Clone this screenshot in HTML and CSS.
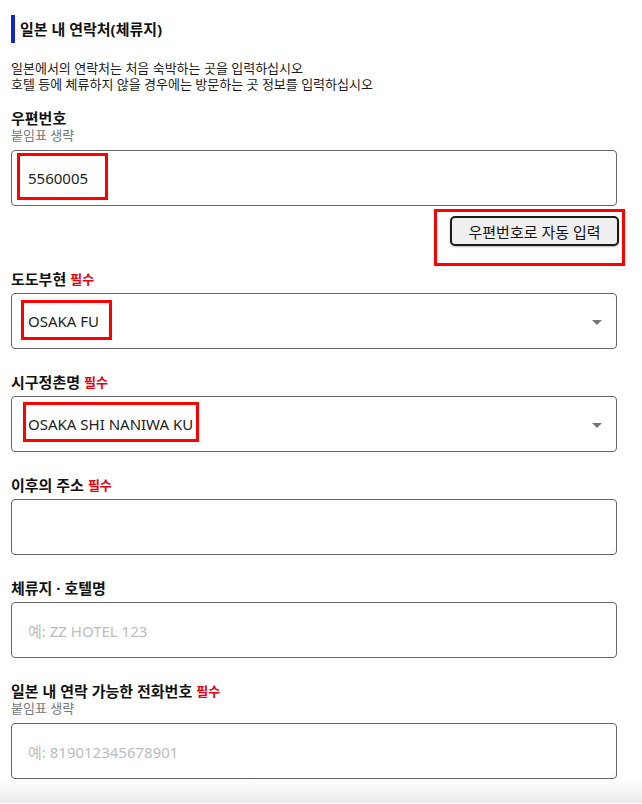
FILE: index.html
```html
<!DOCTYPE html>
<html lang="ko">
<head>
    <meta charset="UTF-8">
    <meta name="viewport" content="width=device-width, initial-scale=1.0">
    <title>일본 내 연락처</title>
    <link rel="stylesheet" href="styles.css">
</head>
<body>
    <div class="form">
        <h2 class="section-title">일본 내 연락처(체류지)</h2>
        <div class="desc">
            <p>일본에서의 연락처는 처음 숙박하는 곳을 입력하십시오</p>
            <p>호텔 등에 체류하지 않을 경우에는 방문하는 곳 정보를 입력하십시오</p>
        </div>

        <div class="field first">
            <div class="label">우편번호</div>
            <div class="sub">붙임표 생략</div>
            <div class="box">
                <span class="value">5560005</span>
                <span class="mark mark-zip"></span>
            </div>
            <div class="btn-row">
                <button class="zip-btn">우편번호로 자동 입력</button>
                <span class="mark mark-btn"></span>
            </div>
        </div>

        <div class="field">
            <div class="label">도도부현 <span class="req">필수</span></div>
            <div class="box select">
                <span class="value">OSAKA FU</span>
                <span class="arrow"></span>
                <span class="mark mark-pref"></span>
            </div>
        </div>

        <div class="field">
            <div class="label">시구정촌명 <span class="req">필수</span></div>
            <div class="box select">
                <span class="value">OSAKA SHI NANIWA KU</span>
                <span class="arrow"></span>
                <span class="mark mark-city"></span>
            </div>
        </div>

        <div class="field">
            <div class="label">이후의 주소 <span class="req">필수</span></div>
            <div class="box"></div>
        </div>

        <div class="field">
            <div class="label">체류지 · 호텔명</div>
            <div class="box">
                <span class="value placeholder">예: ZZ HOTEL 123</span>
            </div>
        </div>

        <div class="field">
            <div class="label">일본 내 연락 가능한 전화번호 <span class="req">필수</span></div>
            <div class="sub">붙임표 생략</div>
            <div class="box">
                <span class="value placeholder">예: 819012345678901</span>
            </div>
        </div>
    </div>
    <div class="fade"></div>
</body>
</html>
```

FILE: styles.css
```css
body {
    margin: 0;
    background: #fff;
    color: #111;
    font-family: "Noto Sans", "Noto Sans CJK KR", sans-serif;
}
.form {
    padding: 15px 25px 0 11px;
}
.section-title {
    margin: 0;
    border-left: 4px solid #1126c9;
    padding-left: 5px;
    height: 28px;
    line-height: 28px;
    font-size: 15px;
    font-weight: bold;
}
.desc {
    margin-top: 16px;
    height: 32px;
    font-size: 13px;
    color: #1a1a1a;
}
.desc p {
    margin: 0;
    height: 16px;
    display: flex;
    align-items: center;
}
.field {
    margin-top: 22px;
}
.field.first {
    margin-top: 16px;
}
.label {
    display: flex;
    align-items: center;
    gap: 4px;
    height: 20px;
    font-size: 15px;
    font-weight: bold;
    margin-bottom: 5px;
}
.label .req {
    color: #e60012;
    font-size: 13px;
}
.sub {
    height: 16px;
    line-height: 16px;
    font-size: 13px;
    color: #777;
    margin: -5px 0 7px 0;
}
.box {
    position: relative;
    height: 54px;
    border: 1px solid #666;
    border-radius: 4px;
    display: flex;
    align-items: center;
    padding-left: 16px;
}
.value {
    font-size: 15px;
    color: #222;
}
.value.placeholder {
    color: #bcbcbc;
}
.arrow {
    position: absolute;
    right: 14px;
    top: 26px;
    border-left: 5px solid transparent;
    border-right: 5px solid transparent;
    border-top: 5px solid #777;
}
.btn-row {
    position: relative;
    display: flex;
    justify-content: flex-end;
    margin-top: 10px;
    margin-right: -2px;
    height: 30px;
}
.zip-btn {
    width: 169px;
    height: 30px;
    border: 2px solid #1a1a1a;
    border-radius: 5px;
    background: #efefef;
    font-family: "Noto Sans", "Noto Sans CJK KR", sans-serif;
    font-size: 15px;
    color: #111;
    box-shadow: 0 1px 2px rgba(0, 0, 0, 0.3);
    padding: 0;
}
/* red annotation frames */
.mark {
    position: absolute;
    border: 3px solid #f00;
    box-sizing: border-box;
}
.mark-zip {
    left: 5px;
    top: 2px;
    width: 91px;
    height: 47px;
}
.mark-btn {
    right: -6px;
    top: -7px;
    width: 191px;
    height: 57px;
}
.mark-pref {
    left: 9px;
    top: 6px;
    width: 91px;
    height: 40px;
}
.mark-city {
    left: 11px;
    top: 5px;
    width: 176px;
    height: 40px;
}
.fade {
    height: 24px;
    background: linear-gradient(#fff, #ebebeb);
}
```
